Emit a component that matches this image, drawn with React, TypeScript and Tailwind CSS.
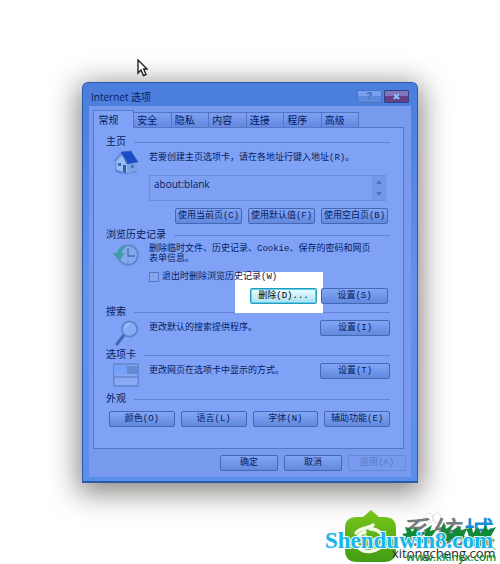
import type { ReactNode } from "react";

const mono = "font-['Liberation_Mono','Noto_Sans_CJK_SC',monospace]";
const sans = "font-['Open_Sans','Noto_Sans_CJK_SC',sans-serif]";

const tabs = ["安全", "隐私", "内容", "连接", "程序", "高级"];

function PushButton({ children, className = "" }: { children: ReactNode; className?: string }) {
  return (
    <button
      type="button"
      className={`flex h-4 items-center justify-center rounded-xs border border-[#4668b4] bg-linear-to-b from-[#82a5f6] to-[#6289de] leading-none whitespace-nowrap ${className}`}
    >
      {children}
    </button>
  );
}

function Section({ title, children, className = "" }: { title: string; children: ReactNode; className?: string }) {
  return (
    <section className={className}>
      <div className="flex h-4 items-center gap-2">
        <h2 className="pt-0.5 text-[10px] leading-4">{title}</h2>
        <span className="h-px flex-1 bg-[#6484d2]" />
      </div>
      {children}
    </section>
  );
}

function HomeIcon() {
  return (
    <svg viewBox="0 0 26 26" className="size-[26px]" aria-hidden="true">
      <ellipse cx="13" cy="21" rx="11" ry="3" fill="#5f8ddb" />
      <path d="M3 11 9 5l6 8v11L3 20Z" fill="#9abdf3" stroke="#4a75cc" strokeWidth=".7" />
      <path d="M14 13h10v7l-9 4Z" fill="#79a4e8" />
      <path d="m8 2 10-1 7 11-11 2Z" fill="#1a4cc4" stroke="#2e5fc4" strokeWidth=".6" />
      <path d="M1 11 8 3l7 10" fill="none" stroke="#4b74c6" strokeWidth="1" />
      <path d="M5 13h3v3H5z" fill="#4568ac" />
      <path d="M10 15h3v8l-3-1z" fill="#375da9" />
      <path d="M18 15h3v3h-3z" fill="#4a75c0" />
    </svg>
  );
}

function HistoryIcon() {
  return (
    <svg viewBox="0 0 26 24" className="h-6 w-[26px]" aria-hidden="true">
      <circle cx="15" cy="12" r="9.800" fill="#86a9ee" stroke="#6488d0" strokeWidth="2" />
      <path d="M15 5v8h7M15 18v1M9 12H8" fill="none" stroke="#4a6cb8" strokeWidth="1.300" />
      <path d="M12 3C7 4 5 7 4 10H0l6 8 6-8H9c0-3 2-5 4-6Z" fill="#3f9da6" />
      <path d="M6 16c2 4 5 5 9 5" fill="none" stroke="#5d96c6" strokeWidth="1.500" />
    </svg>
  );
}

function SearchIcon() {
  return (
    <svg viewBox="0 0 26 26" className="size-[26px]" aria-hidden="true">
      <path d="m11 15-7 9" stroke="#4466b0" strokeWidth="3" strokeLinecap="round" />
      <circle cx="16.500" cy="9" r="7.700" fill="#86acf8" stroke="#5d82cc" strokeWidth="1.800" />
      <path d="M12 8c1-2 3-4 5-4" fill="none" stroke="#a0c0ff" strokeWidth="1.500" />
    </svg>
  );
}

function TabsIcon() {
  return (
    <svg viewBox="0 0 26 24" className="h-6 w-[26px]" aria-hidden="true">
      <rect x=".7" y="1" width="24.600" height="22" rx="1" fill="#83a6f4" stroke="#6385cc" strokeWidth="1.300" />
      <path d="M1 2h13v9H1Z" fill="#75a0f7" />
      <path d="M14 3h11v8H14Z" fill="#658ad4" />
      <path d="M1 14h24" stroke="#6184cc" strokeWidth="1.400" />
      <path d="M2 15h22v7H2z" fill="#89a9f5" />
    </svg>
  );
}

function Cursor() {
  return (
    <svg viewBox="0 0 11 18" className="absolute top-[59px] left-[137px] h-[18px] w-[11px]" aria-hidden="true">
      <path d="M1 1v13l3-3 2.500 5.500 2.500-1L6.700 10H10Z" fill="#fff" stroke="#222" strokeWidth="1.400" />
    </svg>
  );
}

function Watermark() {
  return (
    <svg viewBox="0 0 180 62" className="absolute top-[502px] left-[320px] h-[62px] w-[180px]" aria-hidden="true">
      <defs>
        <linearGradient id="leaf" x1="0" y1="0" x2="0" y2="1">
          <stop offset="0" stopColor="#79c51b" />
          <stop offset="1" stopColor="#429d14" />
        </linearGradient>
      </defs>
      <path d="M37 15h6l8-7 8 7h5q12 0 12 11v22q0 12-12 12H37q-12 0-12-12V26Q25 15 37 15Z" fill="url(#leaf)" />
      <path d="M36 31c5-6 13-4 17-8M50 27c10 0 15 7 12 15s-17 10-23 4c-5-6-3-13 6-16" fill="none" stroke="#f4fbe9" strokeWidth="3.500" strokeLinecap="round" />
      <path d="m44 33 7 6 9-3" fill="none" stroke="#d5efb0" strokeWidth="3" />
      <g fill="none" stroke="#eadde0">
        <ellipse cx="109" cy="16" rx="4" ry="5" />
        <ellipse cx="117" cy="16" rx="4" ry="5" />
      </g>
      <text x="84" y="41" fontSize="30" fontWeight="500" fontFamily="Noto Sans CJK SC, sans-serif" fill="#777b7c">
        系统<tspan fill="#168dd4">城</tspan>
      </text>
      <path
        d="m85 25 5 1 2 4 4-5 2 7 7-3-4 7 6 4-9 2-3-4-4 5-4-5-4 5 2-8-3-3 5-1ZM106 27l6-4-2 6 7-2-5 7 4 6-9 1-3-4ZM121 26l3-6 2 7 6-4-3 8 7 1-8 8-5-3-4 5-2-8 5-2ZM134 27l7-3-1 5 7-3-3 8 5 5-8 1-4-4-5 5-1-7ZM146 27l6-1 1 5 5-6 3 7 4-9 3 5 8-3-5 9 4 5-6 1 7 8-10-5-5 4-3-6-5 4-1-7-7 2 4-7Z"
        fill="#118a38"
      />
      <text x="72" y="56" fontSize="13" fontFamily="Open Sans, sans-serif" fill="#272e2a">xitongcheng.com</text>
      <text x="86" y="59" fontSize="11" fontWeight="600" fontFamily="Open Sans, sans-serif" fill="#158e35">www.kkinyx.com</text>
      <text x="5" y="46" fontSize="23" fontWeight="700" fontFamily="Liberation Serif, serif" fill="#16b5ea" stroke="#effaff" strokeWidth="2" paintOrder="stroke">
        Shenduwin8.com
      </text>
    </svg>
  );
}

export default function App() {
  return (
    <main className={`relative overflow-hidden bg-white p-[82px] text-[9px] text-[#041c60] ${mono}`}>
      <Cursor />
      <div className="rounded-t-md border border-b-2 border-[#285ca9] bg-linear-to-b from-[#4a7ddd] via-[#6590ec] to-[#5b8eea] px-1.5 pb-1 shadow-[0_6px_28px_4px_rgba(20,16,8,0.5)]">
        <header className="flex h-[23px] items-center justify-between px-0.5 pt-1">
          <h1 className={`text-[10px] leading-4 ${sans}`}>Internet 选项</h1>
          <div className="flex gap-0.5">
            <button type="button" aria-label="帮助" className="flex h-[13px] w-[25px] items-center justify-center rounded-[1px] border border-[#4a72c6] bg-linear-to-b from-[#779fee] from-45% to-[#5d89dc] to-50% text-[10px] leading-none font-bold text-[#3b66bd]">
              ?
            </button>
            <button type="button" aria-label="关闭" className="flex h-[13px] w-[25px] items-center justify-center rounded-[1px] border border-[#2d418e] bg-linear-to-b from-[#8177b8] from-45% to-[#673f87] to-50%">
              <svg viewBox="0 0 9 7" className="h-[7px] w-[9px]" aria-hidden="true">
                <path d="m1.500 1 6 5m0-5-6 5" stroke="#4260a9" strokeWidth="3" />
                <path d="m2 1 5 5m0-5L2 6" stroke="#9fbcf8" strokeWidth="1.800" />
              </svg>
            </button>
          </div>
        </header>

        <div className="bg-[#7799ee] pt-1 pr-[5px] pb-1.5 pl-1">
          <nav className={`flex h-[17px] w-[266px] items-end text-[10px] ${sans}`}>
            <button type="button" className="relative -mb-px h-[18px] w-[41px] border border-b-0 border-[#5576c8] bg-[#7fa2f6] pr-2.5 text-center leading-4">
              常规
            </button>
            {tabs.map((tab) => (
              <button key={tab} type="button" className="h-[15px] flex-1 border border-b-0 border-l-0 border-[#5373c3] bg-linear-to-b from-[#7ea1f5] to-[#6488de] pr-2.5 text-center leading-[14px]">
                {tab}
              </button>
            ))}
          </nav>

          <div className="mr-0.5 border border-[#5576c8] bg-[#7fa2f6] pt-1.5 pr-[13px] pl-3">
            <Section title="主页" className="h-[93px]">
              <div className="flex gap-2.5 pl-[7px]">
                <HomeIcon />
                <div className="flex-1">
                  <label htmlFor="home" className="block h-[25px] leading-4 whitespace-nowrap">若要创建主页选项卡，请在各地址行键入地址(R)。</label>
                  <div className="mr-1 flex h-[26px] border border-[#6c8edf] bg-[#7da0f3]">
                    <textarea id="home" defaultValue="about:blank" className={`min-w-0 flex-1 resize-none overflow-hidden pl-1 text-[10px] leading-4 outline-none ${sans}`} />
                    <div className="flex w-[13px] flex-col items-center justify-between bg-[#7597e8] py-1">
                      <span className="border-x-3 border-b-4 border-x-transparent border-b-[#4c70be]" />
                      <span className="border-x-3 border-t-4 border-x-transparent border-t-[#4c70be]" />
                    </div>
                  </div>
                  <div className="mt-[7px] flex justify-end gap-1.5 pr-0.5">
                    <PushButton className="w-[67px]">使用当前页(C)</PushButton>
                    <PushButton className="w-[67px]">使用默认值(F)</PushButton>
                    <PushButton className="w-[67px]">使用空白页(B)</PushButton>
                  </div>
                </div>
              </div>
            </Section>

            <Section title="浏览历史记录" className="h-[77px]">
              <div className="flex gap-2.5 pl-[7px]">
                <HistoryIcon />
                <div className="relative flex-1">
                  <p className="h-[28px] pt-px leading-[10px]">
                    <span className="whitespace-nowrap">删除临时文件、历史记录、Cookie、保存的密码和网页</span>
                    <br />
                    表单信息。
                  </p>
                  <div className="absolute top-[29px] left-[86px] h-[41px] w-[88px] bg-white" />
                  <label className="relative flex h-3 items-center gap-[3px] leading-3 whitespace-nowrap">
                    <input type="checkbox" className="size-2.5 appearance-none border border-[#557ac7] bg-[#86a5eb]" />
                    <span>
                      退出时删除浏览历<span className="text-[#071238]">史记录(W)</span>
                    </span>
                  </label>
                  <div className="relative mt-[5px] flex justify-end gap-1 pr-0.5">
                    <button type="button" className="h-4 w-[67px] rounded-xs border border-[#2799bc] bg-linear-to-b from-[#ecfcff] to-[#a5e1f3] leading-none whitespace-nowrap text-black shadow-[inset_0_0_0_1px_#5bd1ed]">
                      删除(D)...
                    </button>
                    <PushButton className="w-[67px]">设置(S)</PushButton>
                  </div>
                </div>
              </div>
            </Section>

            <Section title="搜索" className="h-[43px]">
              <div className="flex gap-2.5 pl-[7px]">
                <SearchIcon />
                <p className="flex-1 leading-4">更改默认的搜索提供程序。</p>
                <PushButton className="w-[70px]">设置(I)</PushButton>
              </div>
            </Section>

            <Section title="选项卡" className="h-[44px]">
              <div className="flex gap-2.5 pl-[7px]">
                <TabsIcon />
                <p className="flex-1 leading-4">更改网页在选项卡中显示的方式。</p>
                <PushButton className="w-[70px]">设置(T)</PushButton>
              </div>
            </Section>

            <Section title="外观" className="h-[57px]">
              <div className="flex gap-1.5 pt-1 pl-[3px]">
                <PushButton className="flex-1">颜色(O)</PushButton>
                <PushButton className="flex-1">语言(L)</PushButton>
                <PushButton className="flex-1">字体(N)</PushButton>
                <PushButton className="flex-1">辅助功能(E)</PushButton>
              </div>
            </Section>
          </div>

          <footer className="flex justify-end gap-1.5 pt-1.5">
            <PushButton className="w-[58px]">确定</PushButton>
            <PushButton className="w-[58px]">取消</PushButton>
            <button type="button" disabled className="h-4 w-[58px] rounded-xs border border-[#668ada] leading-none text-[#5379c8]">
              应用(A)
            </button>
          </footer>
        </div>
      </div>
      <Watermark />
    </main>
  );
}
